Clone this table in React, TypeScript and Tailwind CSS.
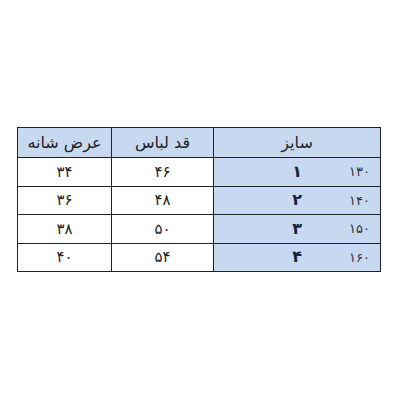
import React from 'react';

const rows = [
  { size: '۱', height: '۱۳۰', length: '۴۶', shoulder: '۳۴' },
  { size: '۲', height: '۱۴۰', length: '۴۸', shoulder: '۳۶' },
  { size: '۳', height: '۱۵۰', length: '۵۰', shoulder: '۳۸' },
  { size: '۴', height: '۱۶۰', length: '۵۴', shoulder: '۴۰' },
];

export default function App() {
  return (
    <div className="w-[400px] h-[400px] bg-white pt-[127px] pl-[17px]" style={{ fontFamily: '"DejaVu Sans", sans-serif' }}>
      <table dir="rtl" className="table-fixed border-collapse border-[1.5px] border-[#222] text-[#222]">
        <colgroup>
          <col className="w-[167px]" />
          <col className="w-[102px]" />
          <col className="w-[94px]" />
        </colgroup>
        <thead>
          <tr className="h-[30px] bg-[#c6d9f1]">
            <th className="border border-[#222] font-normal text-[16px]">سایز</th>
            <th className="border border-[#222] font-normal text-[16px]">قد لباس</th>
            <th className="border border-[#222] font-normal text-[16px]">عرض شانه</th>
          </tr>
        </thead>
        <tbody>
          {rows.map((r) => (
            <tr key={r.size} className="h-[28.5px]">
              <td className="border border-[#222] bg-[#c6d9f1] p-0">
                <div className="grid grid-cols-[1fr_auto_1fr] items-center">
                  <span className="pr-[10px] text-[13px] text-[#333]">{r.height}</span>
                  <span className="font-bold text-[16px] text-[#14213d]">{r.size}</span>
                  <span />
                </div>
              </td>
              <td className="border border-[#222] text-center text-[15px] p-0">{r.length}</td>
              <td className="border border-[#222] text-center text-[15px] p-0">{r.shoulder}</td>
            </tr>
          ))}
        </tbody>
      </table>
    </div>
  );
}
